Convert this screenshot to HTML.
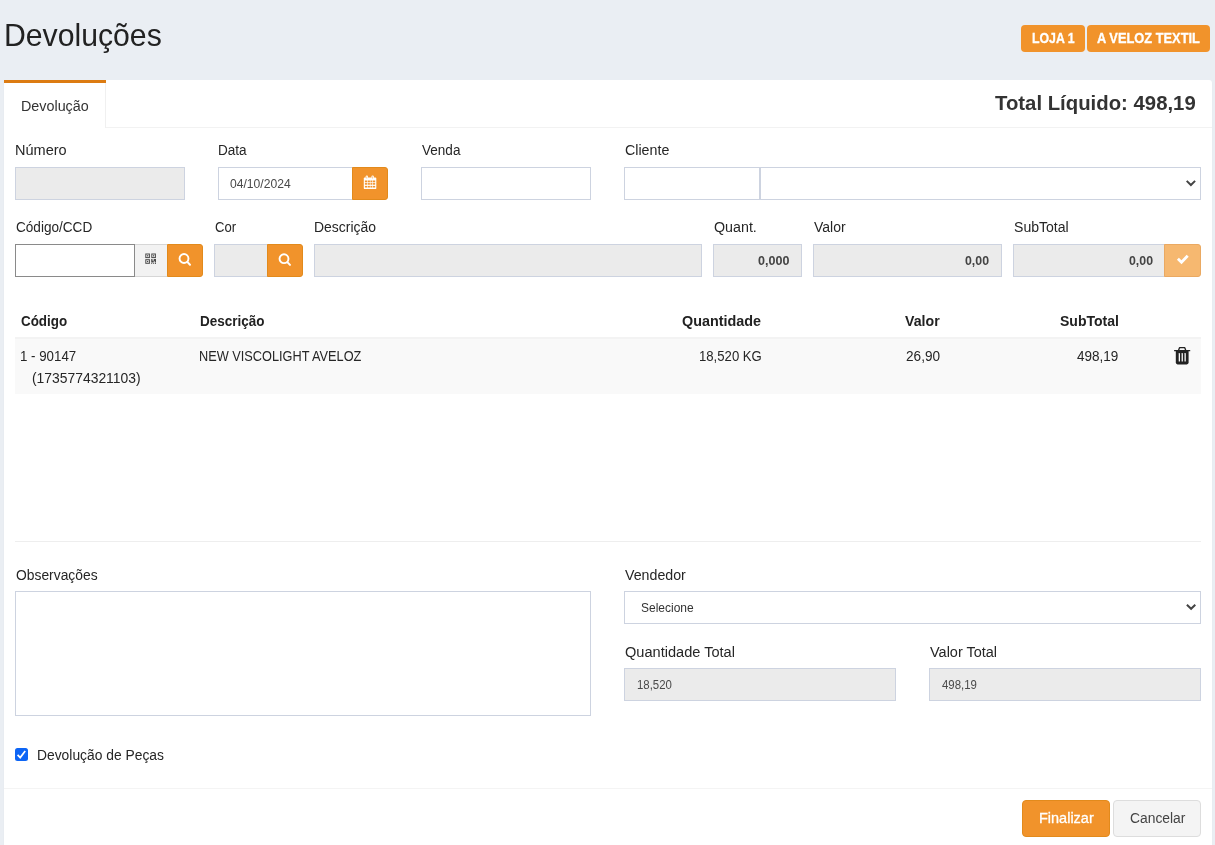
<!DOCTYPE html><html><head><meta charset="utf-8"><title>Devoluções</title><style>
html,body{margin:0;padding:0}body{width:1215px;height:845px;overflow:hidden;position:relative;background:#eaeef3;font-family:"Liberation Sans",sans-serif}
div,span,svg{position:absolute;box-sizing:border-box}
.t{white-space:nowrap;line-height:1;transform-origin:0 0;display:block}
.in{border:1px solid #cdd3e0;background:#fff}.dis{background:#ebebeb}
</style></head><body>
<div style="left:1021px;top:25px;width:64px;height:27px;background:#f1932b;border-radius:4px"></div>
<div style="left:1087px;top:25px;width:123px;height:27px;background:#f1932b;border-radius:4px"></div>
<div style="left:4px;top:80px;width:1208px;height:780px;background:#fff;border-radius:0 3px 3px 0;box-shadow:0 1px 1px rgba(0,0,0,.1)"></div>
<div style="left:106px;top:127px;width:1106px;height:1px;background:#f2f2f2"></div>
<div style="left:4px;top:80px;width:102px;height:3px;background:#dc7b12"></div>
<div style="left:105px;top:83px;width:1px;height:45px;background:#f0f0f0"></div>
<div style="left:15px;top:167px;width:170px;height:33px;border:1px solid #cdd3e0;background:#ebebeb"></div>
<div style="left:218px;top:167px;width:135px;height:33px;border:1px solid #cdd3e0;background:#fff"></div>
<div style="left:352px;top:167px;width:36px;height:33px;background:#f1932b;border:1px solid #e28a1c;border-radius:0 3px 3px 0"></div>
<div style="left:421px;top:167px;width:170px;height:33px;border:1px solid #cdd3e0;background:#fff"></div>
<div style="left:624px;top:167px;width:136px;height:33px;border:1px solid #cdd3e0;background:#fff"></div>
<div style="left:760px;top:167px;width:441px;height:33px;border:1px solid #cdd3e0;background:#fff"></div>
<div style="left:15px;top:244px;width:120px;height:33px;border:1px solid #8a8a8a;background:#fff"></div>
<div style="left:135px;top:244px;width:32px;height:33px;background:#f2f2f2;border-top:1px solid #d6d6d6;border-bottom:1px solid #d6d6d6"></div>
<div style="left:167px;top:244px;width:36px;height:33px;background:#f1932b;border:1px solid #e28a1c;border-radius:0 3px 3px 0"></div>
<div style="left:214px;top:244px;width:54px;height:33px;border:1px solid #cdd3e0;background:#ebebeb"></div>
<div style="left:267px;top:244px;width:36px;height:33px;background:#f1932b;border:1px solid #e28a1c;border-radius:0 3px 3px 0"></div>
<div style="left:314px;top:244px;width:388px;height:33px;border:1px solid #cdd3e0;background:#ebebeb"></div>
<div style="left:713px;top:244px;width:89px;height:33px;border:1px solid #cdd3e0;background:#ebebeb"></div>
<div style="left:813px;top:244px;width:189px;height:33px;border:1px solid #cdd3e0;background:#ebebeb"></div>
<div style="left:1013px;top:244px;width:152px;height:33px;border:1px solid #cdd3e0;background:#ebebeb"></div>
<div style="left:1164px;top:244px;width:37px;height:33px;background:#f6b870;border:1px solid #eaa962;border-radius:0 3px 3px 0"></div>
<div style="left:15px;top:337px;width:1186px;height:57px;background:#f9f9f9;border-top:2px solid #f3f3f3"></div>
<div style="left:15px;top:541px;width:1186px;height:1px;background:#eee"></div>
<div style="left:15px;top:591px;width:576px;height:125px;border:1px solid #cdd3e0;background:#fff"></div>
<div style="left:624px;top:591px;width:577px;height:33px;border:1px solid #cdd3e0;background:#fff"></div>
<div style="left:624px;top:668px;width:272px;height:33px;border:1px solid #cdd3e0;background:#ebebeb"></div>
<div style="left:929px;top:668px;width:272px;height:33px;border:1px solid #cdd3e0;background:#ebebeb"></div>
<div style="left:15px;top:748px;width:13px;height:13px;background:#0d65f5;border-radius:2.5px"></div>
<svg style="left:15px;top:748px" width="13" height="13" viewBox="0 0 13 13"><path d="M2.6 6.9 L5.2 9.6 L10.2 3.1" fill="none" stroke="#fff" stroke-width="1.7" stroke-linecap="butt" stroke-linejoin="miter"/></svg>
<div style="left:4px;top:788px;width:1208px;height:1px;background:#f4f4f4"></div>
<div style="left:1022px;top:800px;width:88px;height:37px;background:#f1932b;border:1px solid #e28a1c;border-radius:4px"></div>
<div style="left:1113px;top:800px;width:88px;height:37px;background:#f4f4f4;border:1px solid #ddd;border-radius:4px"></div>
<svg style="left:363px;top:175px" width="14" height="15" viewBox="0 0 14 15"><g transform="translate(0.8 0.5)"><rect x="0" y="2.1" width="12.5" height="11.5" rx="0.9" fill="#fff"/><rect x="1.9" y="0" width="2.3" height="3.6" rx="1.1" fill="#fff"/><rect x="7.7" y="0" width="2.3" height="3.6" rx="1.1" fill="#fff"/><rect x="2.75" y="0.9" width="0.6" height="2.1" fill="#f1932b" opacity=".8"/><rect x="8.55" y="0.9" width="0.6" height="2.1" fill="#f1932b" opacity=".8"/><rect x="1.1" y="5.0" width="2.30" height="1.80" fill="#f1932b"/><rect x="1.1" y="7.6" width="2.30" height="1.60" fill="#f1932b"/><rect x="1.1" y="10.4" width="2.30" height="1.60" fill="#f1932b"/><rect x="3.95" y="5.0" width="2.15" height="1.80" fill="#f1932b"/><rect x="3.95" y="7.6" width="2.15" height="1.60" fill="#f1932b"/><rect x="3.95" y="10.4" width="2.15" height="1.60" fill="#f1932b"/><rect x="6.65" y="5.0" width="1.95" height="1.80" fill="#f1932b"/><rect x="6.65" y="7.6" width="1.95" height="1.60" fill="#f1932b"/><rect x="6.65" y="10.4" width="1.95" height="1.60" fill="#f1932b"/><rect x="9.2" y="5.0" width="2.20" height="1.80" fill="#f1932b"/><rect x="9.2" y="7.6" width="2.20" height="1.60" fill="#f1932b"/><rect x="9.2" y="10.4" width="2.20" height="1.60" fill="#f1932b"/></g></svg>
<svg style="left:177px;top:251px" width="17" height="17" viewBox="0 0 17 17"><g transform="translate(0.0 0.5)"><circle cx="7" cy="7" r="4.45" fill="none" stroke="#fff" stroke-width="1.9"/><path d="M10.3 10.4 L13.0 13.2" stroke="#fff" stroke-width="2.0" stroke-linecap="round"/></g></svg>
<svg style="left:277px;top:251px" width="17" height="17" viewBox="0 0 17 17"><g transform="translate(0.0 0.7)"><circle cx="7" cy="7" r="4.45" fill="none" stroke="#fff" stroke-width="1.9"/><path d="M10.3 10.4 L13.0 13.2" stroke="#fff" stroke-width="2.0" stroke-linecap="round"/></g></svg>
<svg style="left:145px;top:253px" width="12" height="12" viewBox="0 0 12 12"><g transform="translate(0.2 0.1)"><rect x="0.6" y="0.9" width="3.6" height="3.6" fill="none" stroke="#4a4a4a" stroke-width="1.0"/><rect x="1.8" y="2.1" width="1.2" height="1.2" fill="#4a4a4a"/><rect x="6.6" y="0.9" width="3.6" height="3.6" fill="none" stroke="#4a4a4a" stroke-width="1.0"/><rect x="7.8" y="2.1" width="1.2" height="1.2" fill="#4a4a4a"/><rect x="0.6" y="6.6" width="3.6" height="3.6" fill="none" stroke="#4a4a4a" stroke-width="1.0"/><rect x="1.8" y="7.8" width="1.2" height="1.2" fill="#4a4a4a"/><path d="M6 6 h1.3 v1.6 h1.2 v-1.6 h2.3 v3.4 h-1.2 v-1.2 h-1.1 v1.2 h-2.5 z" fill="#4a4a4a"/><rect x="6" y="9.8" width="1" height="1" fill="#4a4a4a"/><rect x="8" y="9.8" width="1" height="1" fill="#4a4a4a"/><rect x="9.8" y="9.8" width="1" height="1" fill="#4a4a4a"/></g></svg>
<svg style="left:1174px;top:250px" width="19" height="17" viewBox="0 0 19 17"><g transform="translate(0 0.8)"><path d="M3.9 8.0 L7.5 11.5 L13.7 4.9" fill="none" stroke="#fff" stroke-width="2.8" stroke-linejoin="miter"/></g></svg>
<svg style="left:1173px;top:347px" width="20" height="19" viewBox="0 0 20 19"><g transform="translate(0 0)"><path d="M5.6 3.2 L6.3 1.2 Q6.6 0.5 7.4 0.5 L10.9 0.5 Q11.7 0.5 12 1.2 L12.7 3.2" fill="none" stroke="#222" stroke-width="1.3"/><rect x="1" y="2.9" width="16.3" height="1.4" rx="0.6" fill="#222"/><path d="M2.8 4 H15.6 V15.6 Q15.6 17.4 13.8 17.4 H4.6 Q2.8 17.4 2.8 15.6 Z" fill="#222"/><rect x="5.7" y="6.1" width="1.3" height="8.5" rx="0.4" fill="#f9f9f9"/><rect x="8.6" y="6.1" width="1.3" height="8.5" rx="0.4" fill="#f9f9f9"/><rect x="11.5" y="6.1" width="1.3" height="8.5" rx="0.4" fill="#f9f9f9"/></g></svg>
<svg style="left:1183px;top:178px" width="15" height="11" viewBox="0 0 15 11"><g transform="translate(0.9 0.1)"><path d="M2.8 2.8 L7 6.9 L11.2 2.8" fill="none" stroke="#444" stroke-width="2" /></g></svg>
<svg style="left:1184px;top:601px" width="15" height="11" viewBox="0 0 15 11"><g transform="translate(0.1 0.9)"><path d="M2.8 2.8 L7 6.9 L11.2 2.8" fill="none" stroke="#444" stroke-width="2" /></g></svg>
<div id="tx" style="left:0;top:0;width:1215px;height:845px;will-change:transform">
<span class="t" id="t0" style="left:4.15px;top:20.01px;font-size:31.02px;font-weight:normal;color:#222;transform:scaleX(0.9734)">Devoluções</span>
<span class="t" id="t1" style="left:1032.0px;top:31.01px;font-size:14.48px;font-weight:bold;color:#fff;-webkit-text-stroke:.3px #fff;transform:scaleX(0.8516)">LOJA 1</span>
<span class="t" id="t2" style="left:1097.1px;top:31.01px;font-size:14.48px;font-weight:bold;color:#fff;-webkit-text-stroke:.3px #fff;transform:scaleX(0.8868)">A VELOZ TEXTIL</span>
<span class="t" id="t3" style="left:20.61px;top:99.01px;font-size:14.48px;font-weight:normal;color:#333;transform:scaleX(0.9908)">Devolução</span>
<span class="t" id="t4" style="left:995.1px;top:93.01px;font-size:20.68px;font-weight:bold;color:#333;transform:scaleX(0.9835)">Total Líquido: 498,19</span>
<span class="t" id="t5" style="left:14.7px;top:143.01px;font-size:14.48px;font-weight:normal;color:#262626;transform:scaleX(1.0037)">Número</span>
<span class="t" id="t6" style="left:217.66px;top:143.01px;font-size:14.48px;font-weight:normal;color:#262626;transform:scaleX(0.9372)">Data</span>
<span class="t" id="t7" style="left:230.2px;top:178.01px;font-size:12.41px;font-weight:normal;color:#4a4a4a;transform:scaleX(0.9776)">04/10/2024</span>
<span class="t" id="t8" style="left:421.6px;top:143.01px;font-size:14.48px;font-weight:normal;color:#262626;transform:scaleX(0.9359)">Venda</span>
<span class="t" id="t9" style="left:625.1px;top:143.01px;font-size:14.48px;font-weight:normal;color:#262626;transform:scaleX(0.9846)">Cliente</span>
<span class="t" id="t10" style="left:15.6px;top:220.01px;font-size:14.48px;font-weight:normal;color:#262626;transform:scaleX(0.9385)">Código/CCD</span>
<span class="t" id="t11" style="left:215.1px;top:220.01px;font-size:14.48px;font-weight:normal;color:#262626;transform:scaleX(0.9023)">Cor</span>
<span class="t" id="t12" style="left:313.94px;top:220.01px;font-size:14.48px;font-weight:normal;color:#262626;transform:scaleX(0.9640)">Descrição</span>
<span class="t" id="t13" style="left:714.3px;top:220.01px;font-size:14.48px;font-weight:normal;color:#262626;transform:scaleX(0.9855)">Quant.</span>
<span class="t" id="t14" style="left:813.9px;top:220.01px;font-size:14.48px;font-weight:normal;color:#262626;transform:scaleX(0.9670)">Valor</span>
<span class="t" id="t15" style="left:1013.8px;top:220.01px;font-size:14.48px;font-weight:normal;color:#262626;transform:scaleX(0.9716)">SubTotal</span>
<span class="t" id="t16" style="left:758.3px;top:255.01px;font-size:12.41px;font-weight:bold;color:#444;transform:scaleX(1.0114)">0,000</span>
<span class="t" id="t17" style="left:965.2px;top:255.01px;font-size:12.41px;font-weight:bold;color:#444;transform:scaleX(0.9940)">0,00</span>
<span class="t" id="t18" style="left:1128.7px;top:255.01px;font-size:12.41px;font-weight:bold;color:#444;transform:scaleX(0.9940)">0,00</span>
<span class="t" id="t19" style="left:20.9px;top:314.01px;font-size:14.48px;font-weight:bold;color:#222;transform:scaleX(0.9263)">Código</span>
<span class="t" id="t20" style="left:199.5px;top:314.01px;font-size:14.48px;font-weight:bold;color:#222;transform:scaleX(0.9317)">Descrição</span>
<span class="t" id="t21" style="left:682.2px;top:314.01px;font-size:14.48px;font-weight:bold;color:#222;transform:scaleX(0.9932)">Quantidade</span>
<span class="t" id="t22" style="left:905.2px;top:314.01px;font-size:14.48px;font-weight:bold;color:#222;transform:scaleX(0.9788)">Valor</span>
<span class="t" id="t23" style="left:1059.8px;top:314.01px;font-size:14.48px;font-weight:bold;color:#222;transform:scaleX(0.9700)">SubTotal</span>
<span class="t" id="t24" style="left:20.08px;top:349.01px;font-size:14.48px;font-weight:normal;color:#262626;transform:scaleX(0.9186)">1 - 90147</span>
<span class="t" id="t25" style="left:31.9px;top:371.01px;font-size:14.48px;font-weight:normal;color:#262626;transform:scaleX(0.9595)">(1735774321103)</span>
<span class="t" id="t26" style="left:198.62px;top:349.01px;font-size:14.48px;font-weight:normal;color:#262626;transform:scaleX(0.8808)">NEW VISCOLIGHT AVELOZ</span>
<span class="t" id="t27" style="left:698.59px;top:349.01px;font-size:14.48px;font-weight:normal;color:#262626;transform:scaleX(0.9084)">18,520 KG</span>
<span class="t" id="t28" style="left:906.2px;top:349.01px;font-size:14.48px;font-weight:normal;color:#262626;transform:scaleX(0.9403)">26,90</span>
<span class="t" id="t29" style="left:1077.1px;top:349.01px;font-size:14.48px;font-weight:normal;color:#262626;transform:scaleX(0.9342)">498,19</span>
<span class="t" id="t30" style="left:15.6px;top:568.01px;font-size:14.48px;font-weight:normal;color:#262626;transform:scaleX(0.9575)">Observações</span>
<span class="t" id="t31" style="left:625.1px;top:568.01px;font-size:14.48px;font-weight:normal;color:#262626;transform:scaleX(0.9818)">Vendedor</span>
<span class="t" id="t32" style="left:641.3px;top:602.01px;font-size:12.41px;font-weight:normal;color:#333;transform:scaleX(0.9672)">Selecione</span>
<span class="t" id="t33" style="left:625.1px;top:645.01px;font-size:14.48px;font-weight:normal;color:#262626;transform:scaleX(1.0075)">Quantidade Total</span>
<span class="t" id="t34" style="left:930.2px;top:645.01px;font-size:14.48px;font-weight:normal;color:#262626;transform:scaleX(1.0005)">Valor Total</span>
<span class="t" id="t35" style="left:637.3px;top:679.01px;font-size:12.41px;font-weight:normal;color:#4a4a4a;transform:scaleX(0.9199)">18,520</span>
<span class="t" id="t36" style="left:942.1px;top:679.01px;font-size:12.41px;font-weight:normal;color:#4a4a4a;transform:scaleX(0.9199)">498,19</span>
<span class="t" id="t37" style="left:36.84px;top:748.01px;font-size:14.48px;font-weight:normal;color:#262626;transform:scaleX(0.9568)">Devolução de Peças</span>
<span class="t" id="t38" style="left:1038.9px;top:811.01px;font-size:14.48px;font-weight:normal;color:#fff;-webkit-text-stroke:.3px #fff;transform:scaleX(1.0008)">Finalizar</span>
<span class="t" id="t39" style="left:1130.1px;top:811.01px;font-size:14.48px;font-weight:normal;color:#444;transform:scaleX(0.9572)">Cancelar</span>
</div>
</body></html>
